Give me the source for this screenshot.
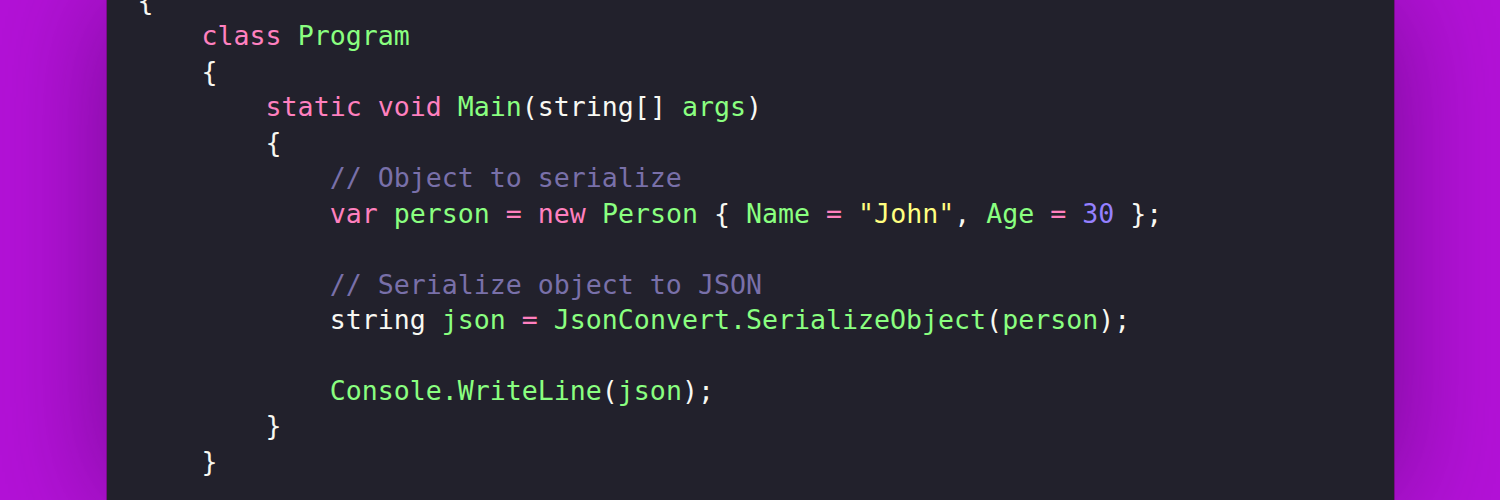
const c = {
  fg: 'text-[#f8f8f2]',
  kw: 'text-[#ff80bf]',
  id: 'text-[#8aff80]',
  str: 'text-[#ffff80]',
  num: 'text-[#9580ff]',
  cm: 'text-[#7970a9]',
}

type Tok = [string, string]

const lines: Tok[][] = [
  [['{', c.fg]],
  [['    ', c.fg], ['class', c.kw], [' ', c.fg], ['Program', c.id]],
  [['    {', c.fg]],
  [
    ['        ', c.fg],
    ['static', c.kw],
    [' ', c.fg],
    ['void', c.kw],
    [' ', c.fg],
    ['Main', c.id],
    ['(string[] ', c.fg],
    ['args', c.id],
    [')', c.fg],
  ],
  [['        {', c.fg]],
  [['            ', c.fg], ['// Object to serialize', c.cm]],
  [
    ['            ', c.fg],
    ['var', c.kw],
    [' ', c.fg],
    ['person', c.id],
    [' ', c.fg],
    ['=', c.kw],
    [' ', c.fg],
    ['new', c.kw],
    [' ', c.fg],
    ['Person', c.id],
    [' { ', c.fg],
    ['Name', c.id],
    [' ', c.fg],
    ['=', c.kw],
    [' ', c.fg],
    ['"John"', c.str],
    [', ', c.fg],
    ['Age', c.id],
    [' ', c.fg],
    ['=', c.kw],
    [' ', c.fg],
    ['30', c.num],
    [' };', c.fg],
  ],
  [],
  [['            ', c.fg], ['// Serialize object to JSON', c.cm]],
  [
    ['            string ', c.fg],
    ['json', c.id],
    [' ', c.fg],
    ['=', c.kw],
    [' ', c.fg],
    ['JsonConvert.SerializeObject', c.id],
    ['(', c.fg],
    ['person', c.id],
    [');', c.fg],
  ],
  [],
  [
    ['            ', c.fg],
    ['Console.WriteLine', c.id],
    ['(', c.fg],
    ['json', c.id],
    [');', c.fg],
  ],
  [['        }', c.fg]],
  [['    }', c.fg]],
]

export default function App() {
  return (
    <div className="h-[500px] w-full overflow-hidden bg-[#b412d8]">
      <div className="mx-auto h-full w-[1287px] overflow-hidden bg-[#22212c] shadow-[0_0_110px_rgba(40,0,60,0.45)] ring-1 ring-[#7a0c8a]">
        <pre
          className="-mt-[17px] pl-[31px] text-[26.6px] leading-[35.46px] whitespace-pre"
          style={{ fontFamily: '"DejaVu Sans Mono", monospace' }}
        >
          {lines.map((line, i) => (
            <div key={i} className="h-[35.46px]">
              {line.map(([text, cls], j) => (
                <span key={j} className={cls}>
                  {text}
                </span>
              ))}
            </div>
          ))}
        </pre>
      </div>
    </div>
  )
}
